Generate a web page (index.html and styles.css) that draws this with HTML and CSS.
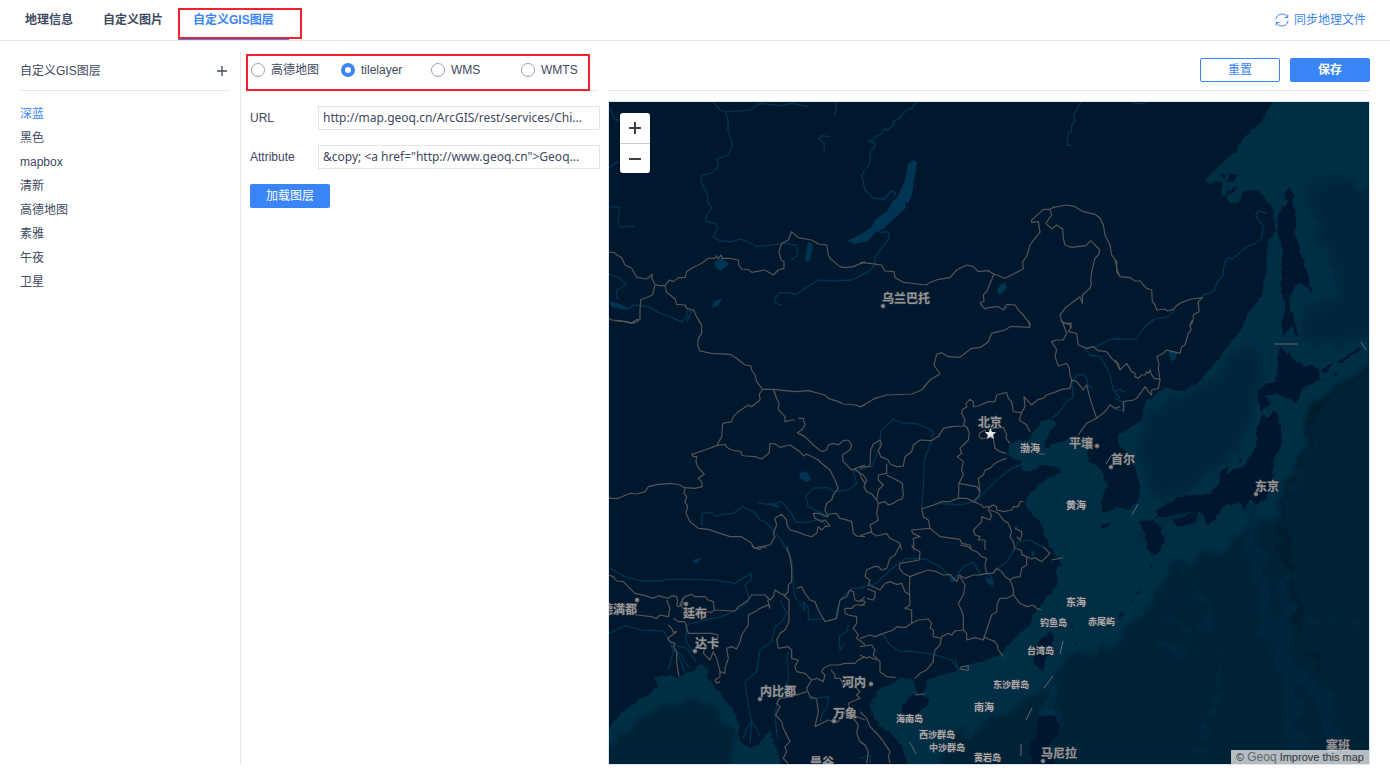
FILE: index.html
```html
<!DOCTYPE html>
<html lang="zh-CN">
<head>
<meta charset="utf-8">
<title>自定义GIS图层</title>
<link rel="stylesheet" href="styles.css">
</head>
<body>
<header class="topbar">
  <nav class="tabs">
    <a class="tab" href="#geo">地理信息</a>
    <a class="tab" href="#image">自定义图片</a>
    <a class="tab active" href="#gis">自定义GIS图层<span class="mark mark-tab"></span></a>
  </nav>
  <button class="sync" type="button">
    <svg width="14" height="14" viewBox="0 0 14 14" fill="none" stroke="currentColor"><path d="M1 6.2C1.400 3 4 1 7 1c2.300 0 4.200 1.200 5.200 3M12.800 1.300v3.200H9.600M13 7.800C12.600 11 10 13 7 13c-2.300 0-4.200-1.200-5.200-3M1.200 12.700V9.500h3.200"/></svg>
    同步地理文件
  </button>
</header>
<div class="page">
  <aside class="sidebar">
    <div class="side-head">
      <span>自定义GIS图层</span>
      <button class="add" type="button" aria-label="添加图层"><svg width="12" height="12" viewBox="0 0 12 12"><path d="M1 6h10M6 1v10" stroke="currentColor" stroke-width="1.300"/></svg></button>
    </div>
    <ul class="layers">
      <li class="current">深蓝</li><li>黑色</li><li>mapbox</li><li>清新</li><li>高德地图</li><li>素雅</li><li>午夜</li><li>卫星</li>
    </ul>
  </aside>
  <form class="settings">
    <div class="kinds">
      <label><input type="radio" name="kind">高德地图</label>
      <label><input type="radio" name="kind" checked>tilelayer</label>
      <label><input type="radio" name="kind">WMS</label>
      <label><input type="radio" name="kind">WMTS</label>
      <span class="mark mark-kinds"></span>
    </div>
    <div class="fields">
      <div class="field"><label for="url">URL</label><input id="url" type="text" value="http://map.geoq.cn/ArcGIS/rest/services/Chi..."></div>
      <div class="field"><label for="attribute">Attribute</label><input id="attribute" type="text" value="&amp;copy; &lt;a href=&quot;http://www.geoq.cn&quot;&gt;Geoq..."></div>
      <button class="btn primary" type="button">加载图层</button>
    </div>
  </form>
  <main class="preview">
    <div class="actions">
      <button class="btn outline" type="button">重置</button>
      <button class="btn primary strong" type="button">保存</button>
    </div>
    <div class="map">
      <svg class="canvas" viewBox="609 102 760 662" preserveAspectRatio="xMidYMid slice" role="img" aria-label="地图预览">
        <defs>
          <filter id="rough" filterUnits="userSpaceOnUse" x="600" y="90" width="780" height="690"><feTurbulence type="fractalNoise" baseFrequency=".16" numOctaves="2" seed="4"/><feDisplacementMap in="SourceGraphic" scale="5" xChannelSelector="R" yChannelSelector="G"/></filter>
          <filter id="soft" filterUnits="userSpaceOnUse" x="590" y="80" width="800" height="710"><feTurbulence type="fractalNoise" baseFrequency=".06" numOctaves="3" seed="7"/><feDisplacementMap in="SourceGraphic" scale="22" xChannelSelector="R" yChannelSelector="G"/><feGaussianBlur stdDeviation="2"/></filter>
          <clipPath id="ocean"><path d="M1276 102L1269 108 1265 118 1252 130 1238 145 1237 150 1218 167 1205 180 1210 183 1222 182 1222 198 1230 204 1240 202 1243 192 1258 190 1268 203 1275 210 1273 217 1276 230 1268 242 1266 268 1262 297 1248 313 1243 325 1238 333 1212 367 1198 383 1182 391 1168 388 1158 392 1145 403 1142 420 1118 435 1118 443 1135 467 1140 487 1138 502 1128 510 1115 507 1102 512 1107 487 1102 470 1090 463 1060 470 1050 550 1060 568 1053 592 1030 625 980 662 927 680 870 705 910 764H1369V102Z M609 728L635 702 657 688 655 678 705 668 742 745 752 748 770 730 782 764H609Z"/></clipPath>
        </defs>
        <rect class="land" x="600" y="90" width="780" height="690"/>
        <g filter="url(#rough)">
          <path class="sea" d="M1276 95L1269 108 1265 118 1252 130 1238 145 1237 150 1218 167 1205 180 1210 183 1222 182 1222 198 1227 195 1230 204 1240 202 1243 192 1258 190 1268 203 1275 210 1273 217 1276 230 1268 242 1266 268 1262 297 1248 313 1243 325 1238 333 1212 367 1198 383 1182 391 1172 390 1165 387 1158 392 1145 403 1142 420 1130 428 1118 435 1118 443 1127 452 1135 467 1140 487 1138 502 1128 510 1115 507 1110 512 1102 512 1102 500 1107 487 1102 470 1090 463 1087 453 1090 443 1073 435 1060 442 1043 448 1047 437 1057 423 1050 419 1042 421 1033 432 1030 438 1015 442 1008 445 1007 455 1020 460 1022 470 1030 473 1043 465 1060 467 1060 472 1047 480 1035 488 1027 497 1025 503 1032 513 1040 523 1045 535 1050 547 1057 557 1061 564 1055 572 1059 580 1053 592 1044 600 1040 608 1034 614 1030 625 1018 635 1003 652 992 659 980 662 967 665 957 670 940 676 927 680 926 688 920 695 915 688 915 680 900 678 892 684 880 688 870 705 872 715 880 725 892 735 903 748 912 780H1390V95Z"/>
          <path class="sea" d="M600 736L609 728 620 714 635 702 650 694 657 688 655 678 665 675 678 677 692 671 700 665 707 668 708 678 715 685 722 697 732 708 739 725 739 742 752 748 760 742 770 730 774 744 778 752 784 780H600Z"/>
        </g>
        <g clip-path="url(#ocean)"><g filter="url(#soft)">
          <path class="mid" d="M1311 180L1345 178 1400 200V315L1312 322 1298 306 1340 300 1331 260 1315 225ZM1252 342L1262 350 1252 420 1235 450 1202 480 1170 500 1145 480 1140 448 1148 410 1190 395 1215 375Z"/>
          <path class="mid" d="M1305 315L1400 318V330L1315 350 1300 340Z"/>
          <path class="deep" d="M1400 355L1345 386 1314 408 1311 448 1290 492 1280 520 1245 524 1220 555 1178 560 1150 602 1115 645 1065 656 1056 690 1051 800H1400Z"/>
          <path class="deep" d="M925 800L950 745 975 727 1010 710 1045 680 1042 800ZM580 762L625 735 645 716 672 704 712 704 734 732 728 800H580Z"/>
          <path class="ridge" d="M1252 510L1258 570 1272 640 1290 680 1298 780M1285 575L1287 620 1280 665 1320 692 1333 730 1330 780"/>
          <path class="ridge thin" d="M1180 566L1198 592 1212 626 1222 650 1215 705 1200 740 1197 764M1153 617L1190 630 1212 622M1155 640L1180 648 1202 664M1160 594H1182M1300 620L1330 624H1358M1138 546L1144 530 1170 515 1200 519"/>
          <path class="trench" d="M1372 366L1340 388 1314 408 1305 455 1289 480 1281 510 1283 550 1296 590 1298 635 1310 650 1323 670"/>
        </g></g>
        <g class="land" filter="url(#rough)">
          <path d="M1290 188L1294 195 1292 202 1297 218 1295 235 1305 265 1313 294 1302 283 1295 285 1288 302 1295 320 1299 337 1291 327 1283 338 1281 325 1285 305 1281 292 1283 250 1277 232 1280 207 1287 205 1285 192Z"/>
          <path d="M1280 347L1290 356 1302 365 1318 367 1320 380 1302 388 1297 403 1277 394 1265 397 1272 403 1261 411 1257 392 1267 382 1275 382 1278 357Z"/>
          <path d="M1262 415L1268 418 1275 410 1281 425 1282 445 1274 457 1273 480 1267 497 1257 505 1249 500 1245 510 1238 502 1222 507 1215 520 1208 525 1200 512 1178 514 1155 518 1157 511 1178 497 1212 493 1222 477 1228 473 1246 463 1256 447 1257 427Z"/>
          <path d="M1172 520L1198 512 1197 521 1184 527 1177 526ZM1140 522L1155 520 1165 537 1160 552 1152 556 1148 548 1145 535ZM1221 470L1228 468 1224 480 1221 478ZM1239 457L1243 459 1240 464ZM1321 370L1333 363 1325 374ZM1337 362L1359 347 1362 348 1340 364ZM1322 380L1328 378 1320 382ZM1334 373H1338V375H1334Z"/>
          <path d="M1050 631L1054 638 1042 672 1034 662 1033 651 1040 640ZM902 705L913 695 929 697 927 705 913 717 903 713ZM1038 715H1056L1060 732 1050 745 1057 770H1033L1030 742 1036 738ZM1101 526L1108 523 1110 526 1104 528ZM1220 176L1227 174 1224 179ZM1230 173L1238 174 1233 184 1228 180ZM1228 190L1238 186 1226 199Z"/>
          <path d="M1118 616L1125 611 1121 619ZM1131 604L1134 600 1135 603ZM1136 593L1141 590 1138 596ZM1150 566L1153 565 1152 569ZM1071 625h2v2h-2ZM1082 623h2v2h-2ZM1074 644h3v1h-3ZM1048 706h1v3h-1ZM1053 709h2v1h-2Z"/>
        </g>
        <g class="lake">
          <path d="M914 160L917 163 914 181 912 195 908 203 905 202 906 208 900 213 895 218 884 228 876 232 868 241 854 244 847 241 859 235 866 231 872 226 875 220 888 210 892 202 898 196 905 180 908 164ZM714 262L722 258 729 264 721 271 716 268ZM808 242L813 244 810 261 805 261ZM1000 285L1005 282 1007 288 1000 295 997 291ZM1003 306l5 1-3 4ZM1168 350L1177 353 1175 360 1171 361ZM800 473L806 471 812 480 806 482 799 478ZM609 301L621 304 628 308 626 310 612 307ZM714 301L722 299 718 306 712 308ZM692 560L702 558 696 564ZM767 502L780 506 776 508ZM985 576l8 5 0 5-6-3ZM1014 526h4l-2 4ZM950 578h4v4h-4ZM1031 550l5 3-4 4Z"/>
        </g>
        <g class="river">
          <g transform="translate(605 95) scale(.3333)"><path d="M325 20L345 45 362 52 370 80 368 100 375 125 383 150 370 180 333 192 340 205 335 222 322 232 290 242 287 255 295 275 308 300 308 325 322 338 305 358 303 378 335 388 338 400 325 425 345 438 380 440 408 432 440 445 455 455 500 450 540 445 575 450 578 480 560 495M362 50L400 48 435 45 465 25 530 32 560 25 610 35M692 20L695 40 688 60M675 125L650 122 642 132 658 145 657 168M12 35L30 75H45M12 218L40 200M12 335L42 337 40 380 45 397 88 393M780 535L740 555 680 558 642 555 600 580 575 597 525 592 510 610 512 625 530 630M12 538L45 550 62 570 35 585 35 610 45 612M68 643L85 630 130 635 160 652 230 680 245 665 247 645 260 650 245 680"/></g>
          <g transform="translate(860 95) scale(.3333)"><path d="M170 20L155 42 145 42 130 55 115 72 100 80 100 90 85 105 72 102 60 120 45 125 38 138 25 138 45 145 45 155 28 170 33 185 28 205 5 240 15 285 40 310 75 312 95 287 107 295 100 305M50 400L60 412 85 410 88 430 45 485 45 510 25 530 0 542M663 20L642 60 645 78 635 90 635 110 625 115 620 150 637 152"/></g>
          <g transform="translate(1115 95) scale(.3333)"><path d="M455 355L430 348 422 362 445 395 440 430 420 445 395 455 355 490 335 490 325 520 325 540 308 560 295 590 265 600 245 630M180 645L160 665 120 672 95 690M45 20L75 27 95 20"/></g>
          <g transform="translate(605 320) scale(.3333)"><path d="M290 615V580L320 578 330 588 385 580 412 560 450 578 465 600 480 605 500 625 525 655 545 690M458 548L500 555 530 545 560 580 570 605 600 608 650 598 665 622M780 445L745 455 755 490 730 510 690 515 665 502 625 505 602 530 610 560 640 575 670 590M215 0L235 7"/></g>
          <g transform="translate(860 320) scale(.3333)"><path d="M0 445L35 440 60 380 62 335 100 297 125 308 175 312 220 335 215 360 193 420 190 500 185 565 240 550 300 555 345 545 375 515 410 480 455 445 510 425M575 295L600 275 615 250 640 230 635 190 650 165 670 163 680 175 685 200 697 202M780 55L750 58 710 80 675 85 690 105 720 110 738 140 750 165 760 210 780 235M460 690L475 665 510 660 550 682"/></g>
          <g transform="translate(1115 320) scale(.3333)"><path d="M115 0L85 25 65 57 0 58M0 215L15 208 30 217M0 235L30 250 27 272 0 268"/></g>
          <g transform="translate(605 545) scale(.3333)"><path d="M15 70L60 95 110 108H175L180 103H240L330 105 390 115 438 85 440 103 420 120 430 150 430 170 405 190 350 215 300 225 245 240 243 290 262 318M12 265L60 243 110 255 175 258 195 290 205 320 190 375M205 315L230 330 240 352 255 370M210 300L245 310 262 332 275 352M215 320L232 360 238 385M525 165L545 205 530 230 510 245 500 290 465 315 455 380 420 410 430 480 440 530M440 530L425 550 415 580M440 530L435 595M440 530L455 550 465 575M550 320L545 340 552 400 518 465 510 510 518 580M545 0L560 45 568 150 600 198 595 170 610 190 610 225 655 220M730 240L725 260 703 275 705 315 720 295M612 462L672 455 665 490 655 500 645 530M690 220L705 165 740 130 780 128"/></g>
          <g transform="translate(860 545) scale(.3333)"><path d="M0 128L50 115 90 75 140 40 195 42 240 65 280 105 310 65 340 52 360 85 390 90 400 115M400 80L440 50 465 10M0 640L30 630 30 656M68 268L90 300 120 320 150 318 220 328 275 345 295 375 285 340"/></g>
        </g>
        <g class="border">
          <g transform="translate(605 95) scale(.3333)"><path d="M12 472L25 472 40 482 50 488 60 510 80 520 95 547 125 552 143 538 140 548 150 568 162 572 180 572 193 555 205 560 220 548 240 548 245 530 260 520 290 505 310 490 330 490 335 482 340 492 348 480 352 490 375 490 400 495 402 512 410 522 430 524 440 532 480 525 505 540 520 525 537 520 537 500 528 495 522 470 530 445 550 435 560 410 580 428 620 435 640 447 665 450 670 480 675 490 705 515 720 518 745 515 780 500M150 570L143 600 107 615 105 645 105 672 92 675 80 685 45 677 20 675 12 670M180 572L185 592 210 612 215 628 240 630 245 640 265 645 275 665 290 690"/></g>
          <g transform="translate(860 95) scale(.3333)"><path d="M0 503L30 505 65 510 75 528 102 530 105 548 130 562 200 570 205 565 235 553 270 548 290 525 320 510 340 515 355 530 385 527 402 537 435 550 465 535 490 522 488 500 500 485 510 450 525 430 540 412 535 380 515 382 515 375 530 362 550 343 570 343 580 337 620 330 645 335 670 350 705 358 720 370 730 390 735 420 750 450 755 480 770 500 770 520 780 545M402 537L380 590 370 600 372 618 360 625 375 642 385 638 415 635 430 645 440 628 465 630 475 645 490 660 512 690M570 343L575 360 558 385 575 402 590 390 608 403 610 430 615 450 635 457 678 452 692 437 705 450 720 465 715 480 705 490 695 530 692 560 695 565 690 580 668 600 667 625 660 605 640 620 615 640 600 660 605 680 630 690"/></g>
          <g transform="translate(1115 95) scale(.3333)"><path d="M0 495L5 515 5 530 15 545 45 548 60 558 75 558 85 570 95 580 110 585 112 620 120 630 125 645 150 642 158 648 175 643 185 632 200 622 230 612 263 608 250 620 252 650 235 660 235 675 228 690"/></g>
          <g transform="translate(605 320) scale(.3333)"><path d="M280 0L290 15 290 40 280 55 278 75 285 93 320 100 375 103 395 115 420 135 438 138 440 150 450 165 455 185 473 208 463 222 465 240 440 260 430 255 400 275 385 290 380 305 353 310 350 350 335 377 300 390 260 403 265 410 275 410 273 425 278 440 298 463 280 475 290 485 292 500 270 505 238 503 225 495 200 490 160 493 130 500 120 515 95 522 75 520 40 535 12 535 12 530M30 2L65 5 85 10 103 0M240 505L237 520 245 530 240 545 248 560 243 580 255 605 280 625 310 628 330 635 375 650 410 650 440 670 445 682 465 688 475 678 495 675 510 650 505 640 515 615 510 595 530 583 545 600 545 612 555 630 575 635 600 645 620 650 635 640 640 620 650 630 660 620 675 618 660 600 650 605 630 595 625 580 640 580 665 590 675 582 695 580 705 595 720 598 740 605 745 640 755 648 780 650M335 377L360 373 365 382 380 390 408 395 410 405 420 408 450 410 470 417 485 405 492 400 495 370 510 372 525 382 555 375 585 395 595 408 605 402 640 420 650 430 675 450 680 460 690 480 700 505 685 525 680 540 665 550 660 570 670 590M473 208H505L515 235 522 250 520 268 540 290 540 305 560 300 570 300M580 295L595 295 600 315 590 330 577 338 600 350 625 375 650 395 665 390 670 375 685 370 700 375 715 362 730 360 740 375 735 390 712 405 715 425 740 450 750 448 765 460 770 475 780 490M740 450L765 440 780 435M505 208L570 215 610 212 660 225 670 235 700 245 715 252 750 255 765 260 780 255"/></g>
          <g transform="translate(860 320) scale(.3333)"><path d="M0 262L45 235 80 225 155 222 185 210 210 180 240 162 222 135 230 103 245 98 265 110 300 112 335 85 360 83 385 65 395 40 415 35 435 30 450 20 470 20 510 22 505 0M0 443L30 438 32 390 40 372 60 360 65 375 55 390 62 410 85 420 90 432 110 440 130 438 135 410 155 395 160 375 180 360 215 362 230 352 235 350 250 325 275 320 310 318 315 300 305 280 307 268 320 262 318 250 330 238 340 245 340 260 355 258 385 245 405 245 410 225 440 217 445 235 455 245 460 275 485 278 495 260 492 230 515 255 535 238 550 235 560 225 590 215 605 208 630 205 635 180 630 165 628 145 620 130 595 138 585 110 590 90 575 65 590 60 610 60 620 40 605 0M610 10L635 10 630 20 635 20 625 35 650 40 655 75 680 85 700 80 715 92 740 95 755 115 770 130 780 150M635 180L650 185 670 210 680 195 690 235 710 295 680 310 665 330 655 345M710 295L735 275 750 255 765 265 780 260M80 432V460L55 465 55 480 70 495 55 510 50 540 55 550 75 545 85 555 100 550 115 540 125 538 130 525 127 490 110 480 80 465M0 460L10 465 20 480 12 500 20 515 35 522 50 540M55 550L50 580 55 600 30 615 35 635 20 640 0 648M30 635L50 648 80 640 90 655 120 670 125 690M320 320L328 340 325 360 300 385 305 400 292 410 310 425 305 450 310 465 297 490 350 500 360 515 355 530 340 545 320 535 295 535 270 545 245 545 220 555 185 567 190 590 205 600 210 625 240 650 300 658 305 670 330 675 335 690M297 490L295 535M440 415L425 420 405 430 390 445 375 450 370 465 355 475 360 515M310 315L325 325 M385 330L400 325 430 322 440 345 438 355 450 370 M358 340L375 330 385 350 400 355 405 385 420 395 437 400M358 340L358 350 365 357 400 350M385 300L395 290 410 295 405 305M340 545L365 555 370 562 390 560 385 570 395 585 390 600 365 590 365 605 350 620 340 630 345 645 360 650 355 660 375 660V690M390 560L400 555 410 560 410 570 430 575 455 570 460 560 475 560 480 545 490 545M390 570L415 580 430 600 445 610 455 635 450 650 460 665 465 690M465 625L485 635 485 648 480 660 470 650M210 625L155 630 158 640 180 650 160 655 162 690M485 278L478 300 500 315 510 335"/></g>
          <g transform="translate(1115 320) scale(.3333)"><path d="M232 0L225 15 228 30 220 40 210 75 200 80 195 100 175 95 155 90 145 100 125 110 132 130 130 145 135 180 130 205 110 210 110 225 100 215 90 200 80 215 65 235 55 240 25 245 25 275M0 120L10 130 15 150 25 140 35 130 50 155 60 160 60 170 70 175 80 165 90 165 95 155 100 160 105 150 110 165 118 175 135 178"/></g>
          <g transform="translate(605 545) scale(.3333)"><path d="M12 90L25 95 35 108 55 110 75 130 90 145 120 152 145 160 160 152 190 160 200 152 215 155 218 170 215 180 220 185 235 175 230 165 240 155 260 148 270 155 300 155 310 165 325 170 328 195 390 198 400 185 430 165 440 150 480 150 495 165 505 155 510 135 525 145 540 150 550 140 550 120 560 110 560 70 555 35 545 10M240 155L225 175 230 185 240 195 320 202 328 195M80 200L95 210 140 215 155 220 165 210 190 215 195 190 185 165M190 240L200 250 205 262 215 260 188 280 195 290 210 295 205 305 215 320 215 350 222 395M205 220L220 230 240 230 250 265 320 265 340 270 335 285M345 410L335 415 330 405 345 395 345 380 335 340 325 320 315 345 295 325 300 305M345 380L360 385 360 370 370 340 365 310 380 305 395 312 405 290 410 270 430 240 430 210 450 200 465 190 490 180 495 190 488 165M535 150L552 165 552 230 540 255 525 265 515 285 520 310 550 305 560 315 560 340 580 345 570 365 575 380 600 385 620 405 635 400 655 410 660 390 650 380 655 370 675 360 700 360 720 355 750 355 760 345 780 335M620 405L605 430 615 455 635 462 640 500 630 545 670 525 685 530 700 530 710 510 735 490 745 510 780 525M605 440L560 455 525 460 515 475 525 485 512 510 530 530 535 550 555 590 540 605 545 620 535 640 550 656M678 375L690 390 690 400 705 400 715 420 750 425 765 440 755 450 765 460 730 475 735 490M730 500L745 520 760 540 755 565 765 590 780 600M575 130L590 125 600 145 615 165 630 170 640 195 660 230 695 220 700 190 705 165 725 155 735 135 745 140 750 165 765 170 780 155M780 180L750 180 740 190 720 190 720 205 730 210 755 215 755 235 745 250 760 270 755 280 770 290 780 300M440 0L450 10 465 5 485 8"/></g>
          <g transform="translate(860 545) scale(.3333)"><path d="M120 0L105 30 90 40 80 70 65 75 55 65 40 65 20 75 15 95 30 105 25 120 40 125 60 135 75 115 90 110 110 118 125 115 135 140 150 150M155 0L160 10 180 20 178 45 120 55 118 70 130 85 150 95 148 130 150 180 135 190 155 195 155 235 175 225 205 222 215 235 210 250 220 255 220 275 245 280M155 235L135 248 110 245 100 255 70 265 45 275 30 270 0 280M150 95L175 85 205 75 230 80 250 90 270 88 290 110 298 90 315 100 340 90 360 90 380 85 375 60 380 40 365 35 350 20 335 15 325 5 300 0M300 95L315 120 310 150 295 175 310 210 310 255 320 265 320 285 345 278 370 285 385 240 395 210 410 200 412 175 420 160 440 160 460 150 460 130 450 105 435 95 425 80 410 70 400 85 380 85M450 105L460 98 480 95 485 70 500 60 500 35 485 28 485 18 470 10M500 35L515 42 525 38 545 50 555 40 570 25 560 15 550 5M575 45L610 38M460 150L480 175 500 185 520 180 530 190 545 195M370 275L385 282 405 290 412 300 415 315 430 335M245 275L265 265 275 270 285 258 310 255M245 275L240 300 225 315 220 340 220 350 200 375 180 385 165 400M0 305L35 300 45 315 40 330 60 350 60 380 80 395 107 398M0 165L15 170 10 180 0 180M45 155L40 165 20 160M45 155L45 140 22 132M0 330L20 340 25 335 50 345M0 500L20 520 30 545 55 570 70 590 90 620 85 635 90 656M0 590L15 600 25 620 20 656M305 365L325 362 325 376 300 372ZM165 450L195 447"/></g>
        </g>
        <path class="dash" d="M1274 344H1298M1361 342L1366 350M1132 515L1138 504M1060 654L1063 641M1044 688L1053 676M1026 720L1032 708M1021 744V756M909 742L912 746 916 754M1106 464L1111 456M1039 454H1045"/>
        <g class="capital"><circle cx="883" cy="306" r="2"/><circle cx="1097" cy="446" r="2"/><circle cx="1111" cy="467" r="2"/><circle cx="1256" cy="494" r="2"/><circle cx="637" cy="600" r="2"/><circle cx="686" cy="604" r="2"/><circle cx="695" cy="651" r="2"/><circle cx="760" cy="699" r="2"/><circle cx="834" cy="721" r="2"/><circle cx="871" cy="684" r="2"/><circle cx="1043" cy="761" r="2"/></g>
        <path class="star" d="M990.500 428L992 432H996L993 435 994 439 990.500 436.500 987 439 988 435 985 432H989Z"/>
        <g class="city">
          <text x="882" y="303">乌兰巴托</text><text x="978" y="427">北京</text><text x="1069" y="448">平壤</text><text x="1111" y="464">首尔</text><text x="1255" y="491">东京</text><text x="601" y="614">德满都</text><text x="683" y="618">廷布</text><text x="695" y="648">达卡</text><text x="760" y="696">内比都</text><text x="842" y="687">河内</text><text x="833" y="718">万象</text><text x="810" y="767">曼谷</text><text x="1041" y="758">马尼拉</text><text x="1326" y="750">塞班</text>
        </g>
        <g class="place">
          <text x="1020" y="452">渤海</text><text x="1066" y="509">黄海</text><text x="1066" y="606">东海</text><text x="974" y="711">南海</text>
          <g class="islet"><text x="1040" y="626">钓鱼岛</text><text x="1088" y="625">赤尾屿</text><text x="1027" y="654">台湾岛</text><text x="993" y="688">东沙群岛</text><text x="896" y="722">海南岛</text><text x="919" y="738">西沙群岛</text><text x="929" y="751">中沙群岛</text><text x="974" y="761">黄岩岛</text></g>
        </g>
      </svg>
      <div class="zoom"><button type="button" aria-label="放大"><svg width="12" height="12" viewBox="0 0 12 12"><path d="M0 6H12M6 0V12"/></svg></button><button type="button" aria-label="缩小"><svg width="12" height="12" viewBox="0 0 12 12"><path d="M0 6H12"/></svg></button></div>
      <div class="credit">© <a class="geoq" href="#geoq">Geoq</a> <a href="#improve">Improve this map</a></div>
    </div>
  </main>
</div>
</body>
</html>
```

FILE: styles.css
```css
* { box-sizing: border-box; }
body {
  margin: 0;
  min-height: 100vh;
  display: flex;
  flex-direction: column;
  background: #fff;
  color: #3d4960;
  font: 12px/24px "Liberation Sans", "Noto Sans CJK SC", sans-serif;
}
button, input { font: inherit; color: inherit; }
button { padding: 0; border: 0; background: none; cursor: pointer; }
a { color: inherit; text-decoration: none; }

.topbar {
  display: flex;
  justify-content: space-between;
  padding: 0 24px 0 10px;
  border-bottom: 1px solid #e7e8ec;
}
.tabs { display: flex; }
.tab { position: relative; padding: 0 15px; line-height: 40px; font-weight: bold; }
.tab.active { color: #3985f5; box-shadow: inset 0 -1px #3985f5; }
.sync { display: flex; align-items: center; gap: 5px; color: #3985f5; }

/* highlight frames drawn over the page */
.mark { position: absolute; border: 2px solid #f5222d; pointer-events: none; }
.mark-tab { inset: 8px -13px 1px 0; }
.mark-kinds { inset: 4px 8px -1px -4px; }

.page { flex: 1; display: flex; padding: 10px 20px 10px 0; }
.sidebar { width: 241px; flex: none; padding: 0 10px 0 20px; border-right: 1px solid #e7e8ec; }
.side-head {
  display: flex;
  justify-content: space-between;
  align-items: center;
  height: 41px;
  margin-top: -1px;
  padding: 2px 2px 0 0;
  border-bottom: 1px solid #e7e8ec;
}
.add { display: flex; }
.layers { margin: 0; padding: 11px 0 10px; list-style: none; }
.current { color: #3985f5; }

.settings { width: 350px; flex: none; margin: -1px 8px 0 9px; }
.kinds {
  position: relative;
  display: flex;
  height: 41px;
  margin-right: 2px;
  border-bottom: 1px solid #e7e8ec;
}
.kinds label { width: 90px; flex: none; display: flex; align-items: center; gap: 6px; padding-left: 1px; white-space: nowrap; }
.kinds label:last-of-type { width: 78px; }
.kinds input {
  appearance: none;
  width: 14px;
  height: 14px;
  margin: 0;
  border: 1px solid #98a0b0;
  border-radius: 50%;
  background: #fff;
}
.kinds input:checked { border: 4px solid #3985f5; }
.fields { display: grid; gap: 15px; justify-items: start; padding-top: 15px; }
.field { width: 100%; display: flex; }
.field label { width: 68px; flex: none; }
.field input {
  flex: 1;
  min-width: 0;
  height: 24px;
  padding: 0 4px;
  border: 1px solid #e1e4ea;
  font-family: "Noto Sans", sans-serif;
}
.btn { width: 80px; height: 24px; border-radius: 2px; }
.primary { background: #3985f5; color: #fff; }
.strong { font-weight: bold; }
.outline { border: 1px solid #3985f5; color: #3985f5; line-height: 22px; }

.preview { flex: 1; min-width: 0; display: flex; flex-direction: column; margin-top: -1px; }
.actions {
  display: flex;
  justify-content: flex-end;
  align-items: center;
  gap: 10px;
  height: 41px;
  margin-bottom: 10px;
  border-bottom: 1px solid #e7e8ec;
}
.map { position: relative; flex: 1; min-height: 320px; border: 1px solid #dde6f0; overflow: hidden; background: #00182d; }
.canvas { position: absolute; width: 100%; height: 100%; }
.zoom { position: absolute; top: 11px; left: 11px; width: 30px; border-radius: 3px; background: #fff; }
.zoom button { width: 30px; height: 30px; display: grid; place-items: center; }
.zoom button + button { border-top: 1px solid #ccc; }
.zoom path { stroke: #404040; stroke-width: 2; }
.credit {
  position: absolute;
  right: 0;
  bottom: 0;
  padding: 0 5px;
  background: rgba(255, 255, 255, .7);
  color: #333;
  font-size: 11px;
  line-height: 14px;
}
.geoq { color: #666; font-size: 12px; }

.land { fill: #00182d; }
.sea { fill: #002e45; }
.mid { fill: #00283d; }
.deep { fill: #002135; }
.ridge { fill: none; stroke: #00283e; stroke-width: 14; }
.ridge.thin { stroke: #00273c; stroke-width: 5; }
.trench { fill: none; stroke: #001a2a; stroke-width: 5; }
.lake { fill: #003453; }
.river, .border { fill: none; stroke-linejoin: round; }
.river { stroke: #003453; stroke-width: 1.3; }
.border { stroke: #565455; stroke-width: 1.2; }
.river path, .border path { vector-effect: non-scaling-stroke; }
.dash { fill: none; stroke: #66696c; }
.capital { fill: #8d8d8d; stroke: #626970; }
.star { fill: #e6e6e6; }
.city, .place {
  font-family: "Noto Sans CJK SC", sans-serif;
  font-weight: bold;
  fill: #959698;
  stroke: #2a3440;
  stroke-width: 1;
  paint-order: stroke;
}
.city { font-size: 12px; }
.place { font-size: 10px; fill: #a8adb1; }
.islet { font-size: 9px; }
```
